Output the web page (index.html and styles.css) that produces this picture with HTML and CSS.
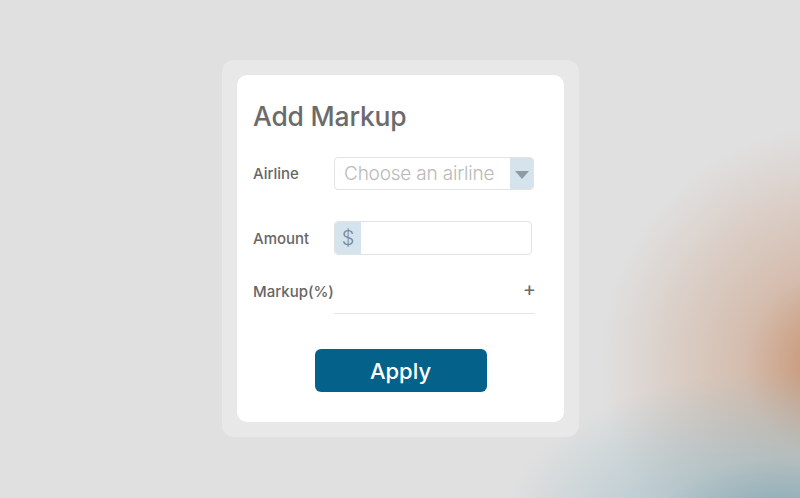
FILE: index.html
```html
<!DOCTYPE html>
<html>
<head>
<meta charset="utf-8">
<link rel="stylesheet" href="styles.css">
</head>
<body>
<div class="stage">
  <div class="frame">
    <div class="card">
      <h1 class="title">Add Markup</h1>
      <div class="row row-airline">
        <label class="label">Airline</label>
        <div class="select">
          <span class="placeholder">Choose an airline</span>
          <span class="caret"><svg width="14" height="8" viewBox="0 0 14 8"><path d="M0 0 L14 0 L7 8 Z" fill="#8e9ba4"/></svg></span>
        </div>
      </div>
      <div class="row row-amount">
        <label class="label">Amount</label>
        <div class="input">
          <span class="prefix">$</span>
          <span class="field"></span>
        </div>
      </div>
      <div class="row row-markup">
        <label class="label">Markup(%)</label>
        <span class="plus">+</span>
      </div>
      <div class="rule"></div>
      <div class="actions">
        <button class="apply">Apply</button>
      </div>
    </div>
  </div>
</div>
</body>
</html>
```
FILE: styles.css
```css
html, body {
  margin: 0;
  padding: 0;
}
body {
  width: 800px;
  height: 498px;
  overflow: hidden;
  font-family: "Inter", "Noto Sans", sans-serif;
  background:
    radial-gradient(ellipse 280px 160px at 780px 530px, rgba(125,165,180,1), rgba(158,188,198,0.6) 45%, rgba(224,224,224,0) 100%),
    radial-gradient(ellipse 240px 240px at 840px 365px, rgba(196,138,100,1), rgba(205,165,140,0.6) 40%, rgba(224,224,224,0) 100%),
    #e0e0e0;
}
.stage {
  height: 498px;
  display: flex;
  justify-content: center;
  padding-top: 60px;
  box-sizing: border-box;
}
.frame {
  width: 357px;
  height: 377px;
  background: #e8e8e8;
  border-radius: 12px;
  padding: 15px;
  box-sizing: border-box;
  margin-left: 1px;
}
.card {
  background: #fff;
  border-radius: 10px;
  height: 347px;
  padding: 22px 30px 0 16px;
  box-sizing: border-box;
}
.title {
  margin: 0;
  font-size: 26.5px;
  line-height: 38px;
  font-weight: 500;
  color: #6b6b6b;
  letter-spacing: -0.2px;
}
.row {
  display: flex;
  align-items: center;
}
.label {
  width: 81px;
  font-size: 15px;
  color: #666;
  font-weight: 500;
}
.row-airline {
  margin-top: 22px;
}
.select {
  width: 200px;
  height: 33px;
  border: 1px solid #e3e3e3;
  border-radius: 4px;
  box-sizing: border-box;
  display: flex;
  align-items: center;
  overflow: hidden;
}
.placeholder {
  flex: 1;
  padding-left: 9px;
  font-size: 19px;
  font-weight: 300;
  color: #b9b9b9;
  letter-spacing: -0.2px;
}
.caret {
  width: 23px;
  height: 100%;
  background: #d5e3ec;
  display: flex;
  align-items: center;
  justify-content: center;
  padding-top: 2px;
  box-sizing: border-box;
}
.row-amount {
  margin-top: 31px;
}
.input {
  width: 198px;
  height: 34px;
  border: 1px solid #e3e3e3;
  border-radius: 4px;
  box-sizing: border-box;
  display: flex;
  overflow: hidden;
}
.prefix {
  width: 26px;
  background: #d5e3ec;
  color: #7b8891;
  font-size: 20px;
  font-weight: 300;
  display: flex;
  align-items: center;
  justify-content: center;
}
.field {
  flex: 1;
}
.row-markup {
  margin-top: 27px;
  justify-content: space-between;
}
.plus {
  font-size: 20px;
  font-weight: 400;
  color: #6a6a6a;
  line-height: 20px;
  margin-top: -6px;
  margin-right: -2px;
}
.rule {
  margin-left: 81px;
  width: 201px;
  height: 1px;
  background: #e6e6e6;
  margin-top: 12px;
}
.actions {
  display: flex;
  justify-content: center;
  margin-top: 35px;
  padding-left: 14px;
}
.apply {
  width: 172px;
  height: 43px;
  background: #04618a;
  border: none;
  border-radius: 6px;
  color: #fff;
  font-family: "Inter", "Noto Sans", sans-serif;
  font-size: 22px;
  font-weight: 500;
}
```
